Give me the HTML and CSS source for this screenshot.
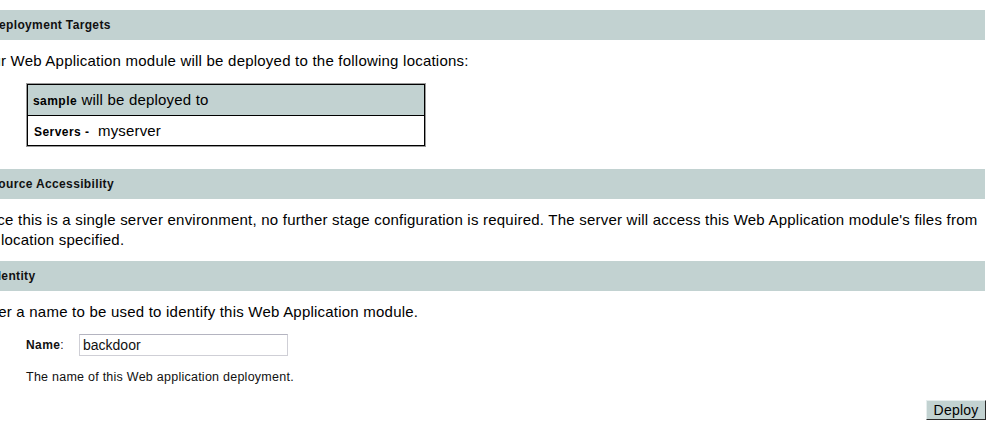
FILE: index.html
```html
<!DOCTYPE html>
<html>
<head>
<meta charset="utf-8">
<title>Deploy</title>
<link rel="stylesheet" href="styles.css">
</head>
<body>
<div class="page">
  <div class="section-head">Deployment Targets</div>
  <p class="text text-first">Your Web Application module will be deployed to the following locations:</p>
  <div class="targets">
    <div class="targets-inner">
      <div class="targets-head"><b class="small-bold">sample</b> will be deployed to</div>
      <div class="targets-row"><b class="small-bold">Servers -</b>&nbsp; myserver</div>
    </div>
  </div>

  <div class="section-head">Source Accessibility</div>
  <p class="text">Since this is a single server environment, no further stage configuration is required. The server will access this Web Application module's files from the location specified.</p>

  <div class="section-head">Identity</div>
  <p class="text text-last">Enter a name to be used to identify this Web Application module.</p>
  <div class="field">
    <label class="field-label" for="name"><b>Name</b>:</label>
    <input class="field-input" id="name" type="text" value="backdoor">
  </div>
  <p class="help">The name of this Web application deployment.</p>
  <div class="actions">
    <button class="btn" type="button">Deploy</button>
  </div>
</div>
</body>
</html>
```
FILE: styles.css
```css
html, body {
  margin: 0;
  padding: 0;
  background: #ffffff;
  overflow: hidden;
}
body {
  font-family: "Liberation Sans", Arial, sans-serif;
  color: #000;
}
.page {
  margin-left: -21px;
  width: 1006px;
  padding-top: 10px;
}
.section-head {
  height: 30px;
  line-height: 30px;
  background: #c2d2d1;
  font-size: 12px;
  font-weight: bold;
  letter-spacing: 0.35px;
  color: #111;
  padding-left: 11px;
}
.text {
  font-size: 15px;
  letter-spacing: 0.22px;
  line-height: 20px;
  margin: 11px 0 11px -4px;
}
.text-first {
  margin-bottom: 12px;
}
.text-last {
  margin-bottom: 12px;
}
.targets {
  margin-left: 47px;
  width: 398px;
  border: 1px solid #9a9a9a;
  margin-bottom: 22px;
}
.targets-inner {
  border: 1px solid #000;
}
.targets-head {
  height: 30px;
  line-height: 30px;
  background: #c2d2d1;
  border-bottom: 1px solid #000;
  font-size: 15px;
  letter-spacing: 0.2px;
  padding-left: 5px;
}
.targets-row {
  height: 29px;
  line-height: 29px;
  font-size: 15px;
  letter-spacing: 0.15px;
  padding-left: 6px;
}
.small-bold {
  font-size: 12px;
  letter-spacing: 0.45px;
}
.field {
  display: flex;
  align-items: center;
  margin-left: 47px;
}
.field-label {
  width: 53px;
  font-size: 12px;
  letter-spacing: 0.4px;
  color: #111;
}
.field-input {
  box-sizing: border-box;
  width: 209px;
  height: 22px;
  border: 1px solid #cfcfd6;
  border-top-color: #b4b4c0;
  padding: 0 3px;
  font-family: "Liberation Sans", Arial, sans-serif;
  font-size: 14px;
  color: #111;
  outline: none;
}
.help {
  margin: 13px 0 0 47px;
  font-size: 12.5px;
  letter-spacing: 0.25px;
  line-height: 16px;
  color: #111;
}
.actions {
  display: flex;
  justify-content: flex-end;
  margin-top: 15px;
}
.btn {
  box-sizing: border-box;
  width: 60px;
  height: 20px;
  padding: 0;
  background: #c2d2d1;
  border: 1px solid;
  border-color: #e6eeee #2a2a2a #2a2a2a #e6eeee;
  font-family: "Liberation Sans", Arial, sans-serif;
  font-size: 14px;
  letter-spacing: 0.2px;
  color: #000;
  margin-right: -1px;
}
```
